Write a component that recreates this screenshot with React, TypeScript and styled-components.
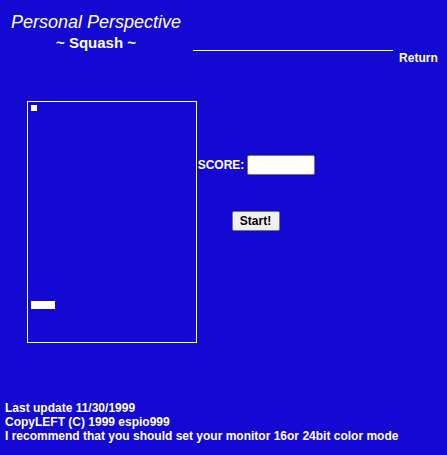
import React from "react";
import styled, { createGlobalStyle } from "styled-components";

const Global = createGlobalStyle`
  html, body { margin: 0; padding: 0; }
  body {
    background: #1409d2;
    color: #ffffff;
    font-family: "Liberation Sans", Arial, sans-serif;
  }
`;

const Page = styled.div`
  width: 447px;
  height: 455px;
  display: flex;
  flex-direction: column;
`;

const Header = styled.header`
  display: flex;
  align-items: flex-start;
  padding: 12px 0 0 11px;
`;

const TitleBlock = styled.div`
  display: flex;
  flex-direction: column;
  align-items: center;
`;

const Title = styled.div`
  font-size: 18px;
  font-style: italic;
  line-height: 21px;
`;

const Subtitle = styled.div`
  font-size: 15px;
  font-weight: bold;
  line-height: 19px;
`;

const Rule = styled.div`
  width: 200px;
  height: 1px;
  background: #ffffff;
  margin: 38px 0 0 12px;
`;

const ReturnLink = styled.a`
  color: #ffffff;
  text-decoration: none;
  font-size: 12px;
  font-weight: bold;
  line-height: 14px;
  margin: 39px 0 0 6px;
`;

const Main = styled.main`
  display: flex;
  align-items: flex-start;
  padding-left: 27px;
  margin-top: 36px;
`;

const Court = styled.div`
  position: relative;
  width: 170px;
  height: 242px;
  box-sizing: border-box;
  border: 1px solid #ffffff;
`;

const Ball = styled.div`
  position: absolute;
  left: 3px;
  top: 3px;
  width: 6px;
  height: 6px;
  background: #ffffff;
`;

const Paddle = styled.div`
  position: absolute;
  left: 3px;
  top: 199px;
  width: 24px;
  height: 8px;
  background: #ffffff;
`;

const Panel = styled.div`
  width: 119px;
  display: flex;
  flex-direction: column;
  align-items: center;
  padding-top: 54px;
`;

const ScoreRow = styled.div`
  display: flex;
  align-items: center;
  gap: 3px;
`;

const ScoreLabel = styled.span`
  font-size: 12px;
  font-weight: bold;
`;

const ScoreInput = styled.input`
  width: 68px;
  height: 20px;
  box-sizing: border-box;
  border: 1px solid #767676;
  border-radius: 2px;
  background: #ffffff;
  padding: 1px 2px;
  margin: 0;
`;

const StartButton = styled.button`
  margin: 36px 2px 0 0;
  width: 48px;
  height: 20px;
  box-sizing: border-box;
  border: 1px solid #767676;
  border-radius: 2px;
  background: #efefef;
  color: #000000;
  font-family: "Liberation Sans", Arial, sans-serif;
  font-size: 12px;
  font-weight: bold;
  padding: 0;
`;

const Footer = styled.footer`
  margin-top: 58px;
  padding-left: 5px;
  font-size: 12px;
  font-weight: bold;
  line-height: 14px;
`;

export default function App() {
  return (
    <Page>
      <Global />
      <Header>
        <TitleBlock>
          <Title>Personal Perspective</Title>
          <Subtitle>~ Squash ~</Subtitle>
        </TitleBlock>
        <Rule />
        <ReturnLink href="#">Return</ReturnLink>
      </Header>
      <Main>
        <Court>
          <Ball />
          <Paddle />
        </Court>
        <Panel>
          <ScoreRow>
            <ScoreLabel>SCORE:</ScoreLabel>
            <ScoreInput type="text" readOnly />
          </ScoreRow>
          <StartButton>Start!</StartButton>
        </Panel>
      </Main>
      <Footer>
        <div>Last update 11/30/1999</div>
        <div>CopyLEFT (C) 1999 espio999</div>
        <div>I recommend that you should set your monitor 16or 24bit color mode</div>
      </Footer>
    </Page>
  );
}
